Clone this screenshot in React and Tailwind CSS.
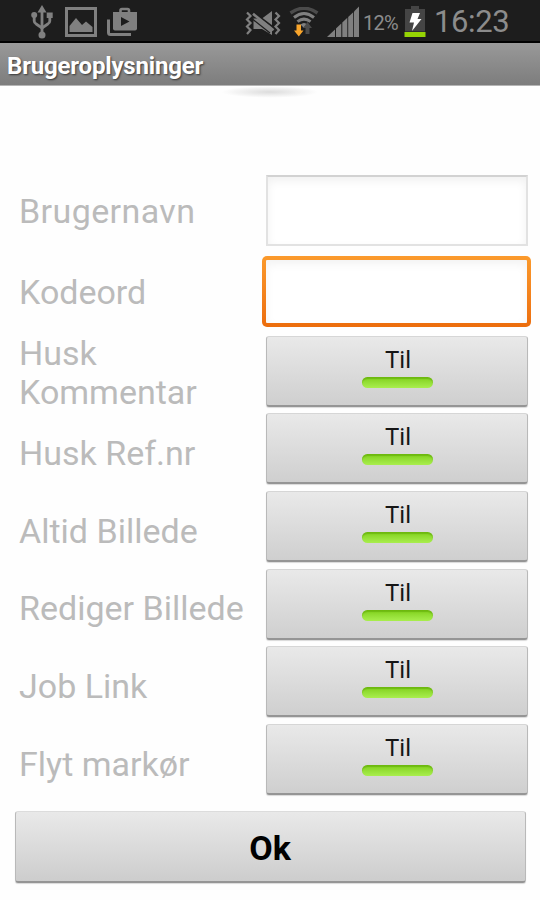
import { useState } from "react";

const toggles = ["Husk Kommentar", "Husk Ref.nr", "Altid Billede", "Rediger Billede", "Job Link", "Flyt markør"];

function UsbIcon() {
    return (
        <svg width="22" height="34" viewBox="0 0 22 34" className="shrink-0" fill="none" stroke="#808080" strokeWidth="2.8">
            <path d="M11 5v25" />
            <path d="M3.2 11v5q0 2 2 3l5.800 4 5.800-4q2-1 2-3v-5" />
            <path d="M11 0l4.500 7.500h-9z" fill="#808080" stroke="none" />
            <circle cx="3.200" cy="10" r="3" fill="#808080" stroke="none" />
            <path d="M15.700 7.500h6V13h-6z" fill="#808080" stroke="none" />
            <circle cx="11" cy="30" r="3.500" fill="#808080" stroke="none" />
        </svg>
    );
}

function PictureIcon() {
    return (
        <svg width="32" height="30" viewBox="0 0 32 30" className="shrink-0">
            <path d="M1.500 1.500h29v27h-29z" fill="none" stroke="#808080" strokeWidth="3" />
            <path d="M4.500 25v-6l6.500-8 6 7 4-3.500 6.500 5.500v5z" fill="#808080" />
        </svg>
    );
}

function PlayStoreIcon() {
    return (
        <svg width="30" height="30" viewBox="0 0 30 30" className="shrink-0">
            <path d="M1.500 12.500v13q0 2 2 2H24" fill="none" stroke="#808080" strokeWidth="3" />
            <path d="M13.500 6V3.500Q13.500 2 15 2h5.500Q22 2 22 3.500V6" fill="none" stroke="#808080" strokeWidth="2.600" />
            <path d="M6 5h24v16.500Q30 23.500 28 23.500H8Q6 23.500 6 21.500z" fill="#808080" />
            <path d="M14 10l8.500 4.600L14 19z" fill="#1c1c1c" />
        </svg>
    );
}

function VibrateOffIcon() {
    return (
        <svg width="36" height="26" viewBox="0 0 36 26" className="shrink-0" fill="none" stroke="#808080" strokeWidth="2.200">
            <path d="M2 2.500l3.500 3.500L2 9.500l3.500 3.500L2 16.500 5.500 20 2 24" />
            <path d="M30.500 2.500L34 6l-3.500 3.500L34 13l-3.500 3.500L34 20l-3.500 4" />
            <path d="M8.500 8.500H17l10-7.500v24l-10-6H8.500z" fill="#808080" stroke="none" />
            <path d="M8 4.500l21 15.500M8 9.500l17 13.500" stroke="#1d1d1d" strokeWidth="1.300" />
            <path d="M8 2l20.500 15.500" stroke="#1d1d1d" strokeWidth="2" />
            <path d="M8 3.800l20.500 16.500" strokeWidth="2.600" />
            <path d="M17 25l-6-5h6l8 6z" fill="#1d1d1d" stroke="none" />
        </svg>
    );
}

function WifiIcon() {
    return (
        <svg width="30" height="30" viewBox="0 0 30 30" className="shrink-0" fill="none">
            <path d="M1.500 6Q15-3.500 28.500 6" stroke="#4b4b4b" strokeWidth="3.400" />
            <path d="M5 10.500Q15 2.500 25 10.500" stroke="#808080" strokeWidth="3" />
            <path d="M8.500 14.700Q15 9.500 21.500 14.700" stroke="#808080" strokeWidth="3" />
            <path d="M11.500 17.500Q15 14.500 18.500 17.500L15 21z" fill="#808080" />
            <path d="M18.500 15l4.500 6h-2.500v6h-4v-6H14z" fill="#4b4b4b" />
            <path d="M7.500 17.500h4.500v6h2.500L9.800 29.500 5 23.500h2.500z" fill="#f9a52b" />
        </svg>
    );
}

function SignalIcon() {
    return (
        <svg width="33" height="32" viewBox="0 0 33 32" className="shrink-0" fill="#808080">
            <path d="M0 31l8-7.500V31z" />
            <path d="M9 22.500l5.300-5V31H9z" />
            <path d="M15.300 16.500l5-4.800V31h-5z" />
            <path d="M21.200 11l5-4.800V31h-5z" />
            <path d="M27 5.500L32 .500V31h-5z" />
        </svg>
    );
}

function BatteryIcon() {
    return (
        <svg width="22" height="31" viewBox="0 0 22 31" className="shrink-0">
            <path d="M7 0h8v3h6v22.500H1V3h6z" fill="#454545" />
            <path d="M.500 26h21v5H.500z" fill="#96d404" />
            <path d="M8.500 7h7.500l-2.500 6h4L8 25l2-8.500H5.500z" fill="#fff" />
        </svg>
    );
}

function StatusBar() {
    return (
        <div className="flex h-[43px] items-center border-b-2 border-black bg-[#1d1d1d] pl-[31px] pt-0.5 text-[#8c8c8c]">
            <UsbIcon />
            <div className="ml-3"><PictureIcon /></div>
            <div className="ml-2.5"><PlayStoreIcon /></div>
            <div className="ml-[108px] mt-0.5"><VibrateOffIcon /></div>
            <div className="ml-2"><WifiIcon /></div>
            <div className="ml-2"><SignalIcon /></div>
            <span className="ml-[3px] mt-[3px] w-[37px] whitespace-nowrap text-[20px] tracking-[-0.7px]">12%</span>
            <div className="ml-1"><BatteryIcon /></div>
            <span className="ml-2 whitespace-nowrap text-[31px] leading-none tracking-[-0.4px]">16:23</span>
        </div>
    );
}

function Toggle() {
    const [on, setOn] = useState(true);

    return (
        <button
            className="flex h-[71px] w-[262px] flex-col items-center rounded-[3px] border border-x-[#b9b9b9] border-t-[#d6d6d6] border-b-2 border-b-[#959595] bg-gradient-to-b from-[#e9e9e9] to-[#cfcfcf] pt-[9px] shadow-[0_1px_1px_rgba(0,0,0,0.15)]"
            onClick={() => setOn(!on)}
        >
            <span className="pl-0.5 text-[24px] leading-7 text-[#161616]">{on ? "Til" : "Fra"}</span>
            <span className={`mt-[3px] h-[11px] w-[71px] rounded-full ${on ? "bg-gradient-to-b from-[#7fd013] to-[#a9ee4d] shadow-[inset_0_2px_1px_rgba(80,150,0,0.4)]" : "bg-gray-400"}`}></span>
        </button>
    );
}

export default function App() {
    const [username, setUsername] = useState("");
    const [password, setPassword] = useState("");

    return (
        <div className="h-[900px] w-[540px] overflow-hidden bg-[#fefefe] font-[Roboto,sans-serif]">
            <StatusBar />

            {/* Title */}
            <div className="flex h-[43px] items-center border-b border-[#b5b5b5] bg-gradient-to-b from-[#999999] to-[#7d7d7d] pl-[7px] pt-[3px]">
                <p className="text-[24px] font-bold tracking-[-0.18px] text-white [text-shadow:1px_1px_2px_rgba(0,0,0,0.6)]">Brugeroplysninger</p>
            </div>
            <div className="mx-auto h-3 w-[100px] bg-[radial-gradient(ellipse_at_center,#dcdcdc_0%,#fefefe_68%)]"></div>

            {/* Login fields */}
            <div className="mt-[77px] flex h-[71px] items-center justify-between pl-[19px] pr-3 text-[34px] text-[#bbbbbb]">
                <label htmlFor="username" className="pt-0.5 tracking-[0.4px]">Brugernavn</label>
                <input
                    id="username"
                    type="text"
                    className="h-[71px] w-[262px] border-2 border-[#e2e2e2] border-t-[#d2d2d2] bg-white px-3 text-black shadow-[inset_0_4px_10px_rgba(0,0,0,0.06)] outline-none"
                    value={username}
                    onChange={(e) => setUsername(e.target.value)}
                />
            </div>
            <div className="mt-[10px] flex h-[71px] items-center justify-between pl-[19px] pr-[9px] text-[34px] text-[#bbbbbb]">
                <label htmlFor="password" className="pt-0.5">Kodeord</label>
                <div className="h-[71px] w-[269px] rounded-[5px] bg-gradient-to-b from-[#fb9a2c] to-[#ec6d0c] p-1">
                    <input
                        id="password"
                        type="password"
                        className="h-full w-full rounded-[1px] bg-white px-3 text-black shadow-[inset_0_4px_10px_rgba(0,0,0,0.05)] outline-none"
                        value={password}
                        onChange={(e) => setPassword(e.target.value)}
                    />
                </div>
            </div>

            {/* Settings */}
            <div className="mt-[5.5px]">
                {
                    toggles.map((label, index) => {
                        return (
                            <div key={label} className="flex h-[77.6px] items-center justify-between pl-[19px] pr-[12px]">
                                <p className={`w-[235px] text-[34px] leading-[39.5px] text-[#bbbbbb] ${index === 0 ? "pt-1" : "pt-[10px]"}`}>{label}</p>
                                <Toggle />
                            </div>
                        );
                    })
                }
            </div>

            <button className="mx-auto mt-[13px] block h-[72px] w-[511px] rounded-[3px] border border-x-[#b9b9b9] border-t-[#dcdcdc] border-b-2 border-b-[#959595] bg-gradient-to-b from-[#e9e9e9] to-[#cdcdcd] pt-1 text-[34px] font-bold text-black shadow-[0_1px_1px_rgba(0,0,0,0.15)]">Ok</button>
        </div>
    );
}
